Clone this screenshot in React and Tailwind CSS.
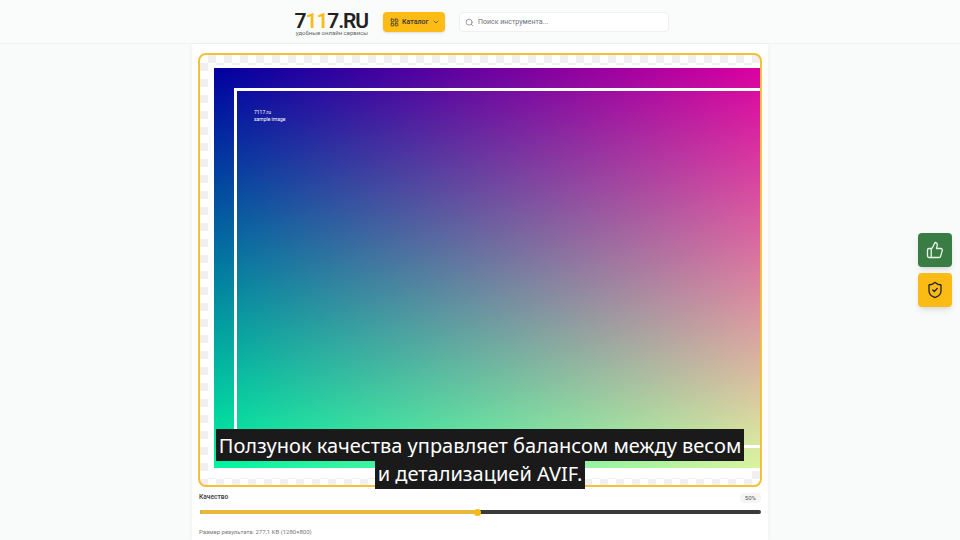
import React from "react";
import { LayoutGrid, ChevronDown, Search, ThumbsUp, ShieldCheck } from "lucide-react";

export default function App() {
  return (
    <div className="h-[540px] w-[960px] overflow-hidden bg-[#f9fafa] font-['Roboto',sans-serif] text-[#212121] flex flex-col">
      <header className="h-[44px] shrink-0 bg-[#fafbfb] border-b border-[#f3f4f4] flex items-start pt-3 pl-[295px]">
        <div className="flex flex-col items-end w-[73px]">
          <div className="text-[21px] leading-[17px] mt-[1px] font-semibold tracking-[-1.1px] whitespace-nowrap">
            7<span className="text-[#fbbc1a]">11</span>7.RU
          </div>
          <div className="text-[6px] leading-[6px] text-[#666] whitespace-nowrap">удобные онлайн сервисы</div>
        </div>
        <button className="ml-[15px] w-[62px] h-[20px] rounded bg-[#fdbb16] flex items-center pl-[7px] gap-[3px] text-[7px] font-medium text-[#333] shadow-sm">
          <LayoutGrid size={9} strokeWidth={2} />
          <span>Каталог</span>
          <ChevronDown size={8} strokeWidth={2} className="ml-[1px]" />
        </button>
        <div className="ml-[14px] w-[210px] h-[20px] rounded-sm bg-white border border-[#f0f0f0] flex items-center pl-[5px] gap-[4px] text-[7px] text-[#6b7280]">
          <Search size={9} strokeWidth={1.75} />
          <span>Поиск инструмента...</span>
        </div>
      </header>

      <main className="w-[576px] mx-auto flex-1 bg-white shadow-[0_0_6px_rgba(0,0,0,0.05)] px-[6px] pt-[9px] flex flex-col relative">
        <div className="h-[434px] w-[564px] shrink-0 rounded-lg border-2 border-[#f5bf3a] overflow-hidden bg-[conic-gradient(#efefef_25%,#ffffff_0_50%,#efefef_0_75%,#ffffff_0)] bg-[length:16px_16px] pt-[10px] pl-[8px]">
          <div className="w-[544px] h-[413px] bg-white pt-[3px] pl-[6px]">
            <div className="w-[640px] h-[400px] p-[20px] bg-[linear-gradient(to_right,#000000,#ff0000),linear-gradient(to_bottom,#0000a0,#00f5a0)] bg-blend-screen">
              <div className="w-full h-full border-[3px] border-white pt-[18px] pl-[17px] text-white text-[5px] leading-[6.5px] font-['Roboto',sans-serif]">
                <div>7117.ru</div>
                <div>sample image</div>
              </div>
            </div>
          </div>
        </div>

        <div className="flex items-center justify-between h-[15px] mt-[3px] pl-[1px] pr-[1px]">
          <span className="text-[6.6px] font-semibold text-[#444]">Качество</span>
          <span className="text-[6px] text-[#555] bg-[#f5f5f5] rounded px-[5px] leading-[10px]">50%</span>
        </div>

        <div className="relative h-[4px] mt-[5px] ml-[2px] w-[561px] rounded-full bg-[#3a3a3a] flex">
          <div className="w-[278px] h-full rounded-l-full bg-[#e9b83a]" />
          <div className="absolute left-[274px] top-[-1.5px] w-[7px] h-[7px] rounded-full bg-[#f7b91a]" />
        </div>

        <div className="mt-[14px] pl-[1px] text-[6px] leading-[8px] text-[#777]">Размер результата: 277,1 KB (1280×800)</div>

        <div className="absolute left-0 right-0 top-[388px] text-center text-[20px] leading-[28px] text-white font-['Noto_Sans',sans-serif] whitespace-nowrap">
          <span className="bg-[#1a1a1a] px-[3px] pt-[3px] pb-[2px] box-decoration-clone">
            Ползунок качества управляет балансом между весом
            <br />
            и детализацией AVIF.
          </span>
        </div>
      </main>

      <div className="fixed left-[918px] top-[233px] flex flex-col gap-[6px]">
        <button className="w-[34px] h-[34px] rounded bg-[#3a7d44] flex items-center justify-center shadow-md">
          <ThumbsUp size={18} strokeWidth={1.75} className="text-[#eaf5ea]" />
        </button>
        <button className="w-[34px] h-[34px] rounded bg-[#fbbb15] text-[#222] flex items-center justify-center shadow-md">
          <ShieldCheck size={18} strokeWidth={1.75} />
        </button>
      </div>
    </div>
  );
}
